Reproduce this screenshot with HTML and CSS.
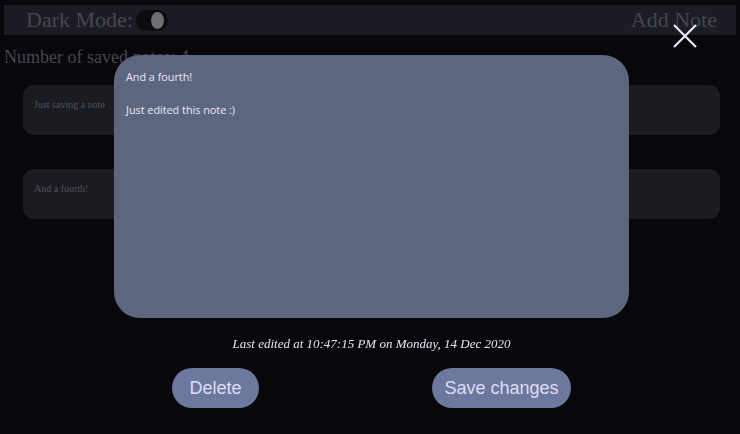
FILE: index.html
```html
<!DOCTYPE html>
<html>
<head>
<meta charset="utf-8">
<link rel="stylesheet" href="styles.css">
</head>
<body>
<div class="page">
  <header class="topbar">
    <div class="mode">
      <span class="mode-label">Dark Mode:</span>
      <span class="toggle"><span class="knob"></span></span>
    </div>
    <span class="add">Add Note</span>
  </header>
  <div class="count">Number of saved notes: 4</div>
  <div class="notes">
    <div class="note">Just saving a note</div>
    <div class="note">And a fourth!</div>
  </div>
</div>
<div class="overlay">
  <svg class="close" width="24" height="24" viewBox="0 0 24 24"><path d="M1 1L23 23M23 1L1 23" stroke="#ebe6fa" stroke-width="2.2" fill="none"/></svg>
  <div class="modal">
    <div class="editor">And a fourth!<br><br>Just edited this note :)</div>
  </div>
  <div class="edited">Last edited at 10:47:15 PM on Monday, 14 Dec 2020</div>
  <div class="actions">
    <button class="btn btn-delete">Delete</button>
    <button class="btn btn-save">Save changes</button>
  </div>
</div>
</body>
</html>
```
FILE: styles.css
```css
html, body {
  margin: 0;
  padding: 0;
  background: #07070c;
  width: 740px;
  height: 434px;
  overflow: hidden;
}
.page {
  padding: 5px 4px 0 4px;
  font-family: "Liberation Serif", serif;
}
.topbar {
  height: 30px;
  background: #1c1d24;
  display: flex;
  align-items: center;
  justify-content: space-between;
  padding: 0 19px 0 22px;
}
.mode {
  display: flex;
  align-items: center;
  gap: 3px;
}
.mode-label {
  font-size: 22px;
  color: #46464c;
  line-height: 30px;
}
.toggle {
  width: 32px;
  height: 21px;
  border-radius: 11px;
  background: #0b0b10;
  display: flex;
  align-items: center;
  justify-content: flex-end;
  padding-right: 4px;
  box-sizing: border-box;
}
.knob {
  width: 13px;
  height: 17px;
  border-radius: 50%;
  background: #6f6f70;
}
.add {
  font-size: 22px;
  color: #46464c;
  line-height: 30px;
}
.count {
  font-size: 18px;
  color: #46464c;
  margin-top: 11px;
  line-height: 22px;
}
.notes {
  display: flex;
  flex-direction: column;
  gap: 34px;
  margin: 17px 16px 0 19px;
}
.note {
  height: 50px;
  background: #1a1c22;
  border-radius: 11px;
  box-sizing: border-box;
  padding: 14px 11px;
  font-size: 10px;
  color: #505058;
}
.overlay {
  position: fixed;
  inset: 0;
}
.close {
  position: absolute;
  left: 673px;
  top: 24px;
}
.modal {
  position: absolute;
  left: 114px;
  top: 55px;
  width: 515px;
  height: 263px;
  background: #5d667f;
  border-radius: 26px;
  box-sizing: border-box;
  padding: 14px 12px;
}
.editor {
  font-family: "Open Sans", sans-serif;
  font-size: 10.8px;
  line-height: 16.5px;
  color: #ece6f6;
}
.edited {
  position: absolute;
  top: 336px;
  left: 0;
  right: 0;
  text-align: center;
  font-family: "Liberation Serif", serif;
  font-style: italic;
  font-size: 13px;
  color: #e6e4f4;
  padding-left: 3px;
}
.actions {
  position: absolute;
  top: 368px;
  left: 172px;
  width: 399px;
  display: flex;
  justify-content: space-between;
}
.btn {
  height: 40px;
  border: none;
  border-radius: 20px;
  background: #6c789e;
  color: #dfdcf4;
  font-family: "Liberation Sans", Arial, sans-serif;
  font-size: 18px;
  padding: 0;
}
.btn-delete { width: 87px; }
.btn-save { width: 139px; }
```
